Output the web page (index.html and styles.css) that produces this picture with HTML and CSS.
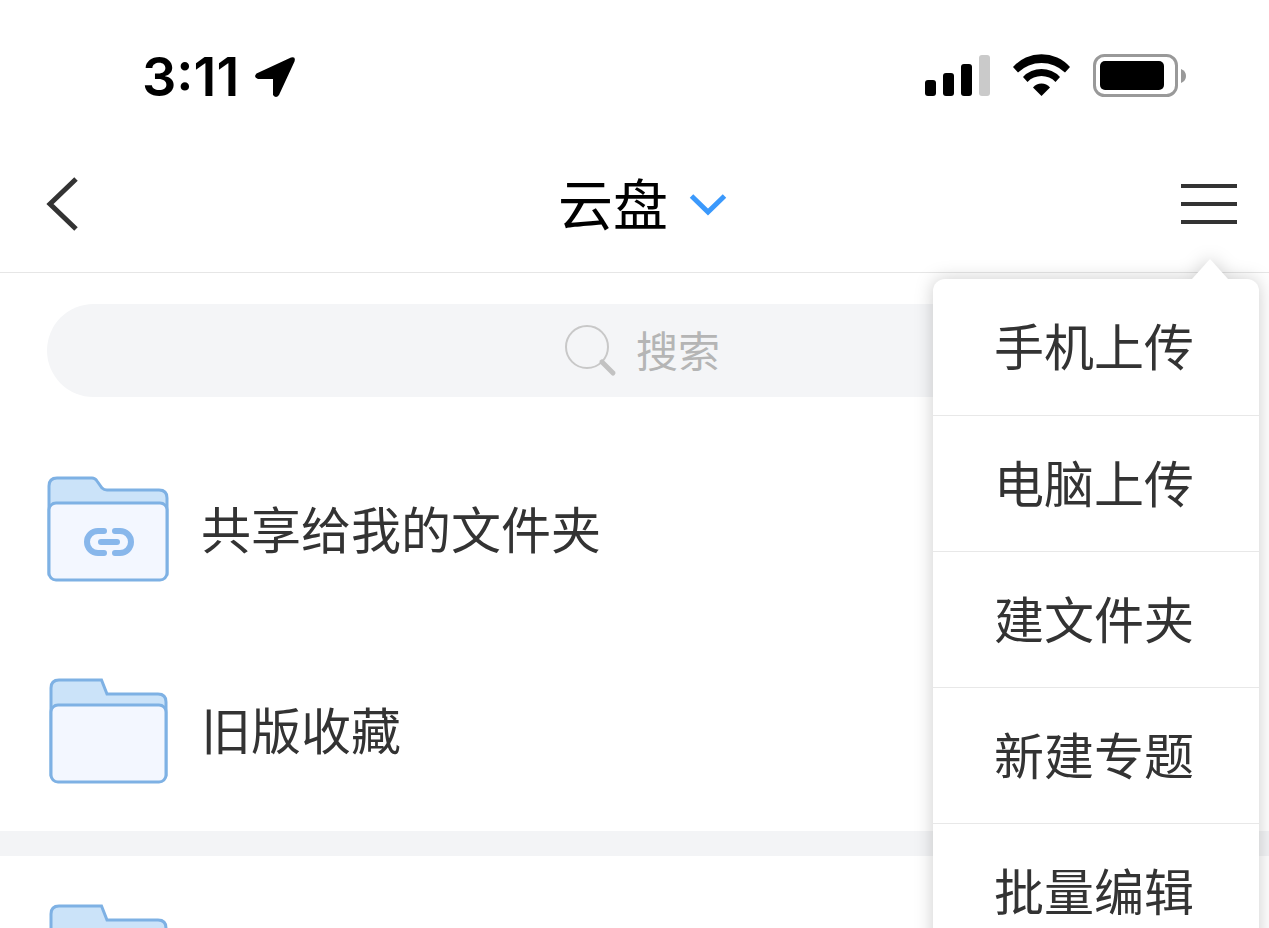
FILE: index.html
```html
<!DOCTYPE html>
<html lang="zh-CN">
<head>
    <meta charset="UTF-8">
    <meta name="viewport" content="width=device-width, initial-scale=1.0">
    <title>云盘</title>
    <link rel="stylesheet" href="styles.css">
</head>
<body>
    <svg class="defs" aria-hidden="true">
        <symbol id="folder" viewBox="0 0 122 106">
            <path d="M4 97V10q0-8 8-8H54.500L60 16H111q8 0 8 8V97z" fill="#cbe3f9" stroke="#7eb1e4" stroke-width="3"/>
            <rect x="4" y="27" width="115" height="77" rx="7" fill="#f3f7ff" stroke="#7eb1e4" stroke-width="3"/>
        </symbol>
    </svg>

    <div class="screen">
        <div class="status-bar">
            <div class="status-left">
                <span class="time">3:11</span>
                <svg width="42" height="42" viewBox="0 0 42 42">
                    <path d="M2.500 17.500 37 1.500Q42 0 40.500 5.500L25 39Q22 43 19 39V23H4Q-1 21 2.500 17.500z"/>
                </svg>
            </div>
            <div class="status-right">
                <svg width="66" height="44" viewBox="0 0 66 44">
                    <rect x="0" y="26" width="11" height="16" rx="3"/>
                    <rect x="18" y="19" width="11" height="23" rx="3"/>
                    <rect x="36" y="10" width="11" height="32" rx="3"/>
                    <rect x="54" y="1" width="11" height="41" rx="3" fill="#cacaca"/>
                </svg>
                <svg width="58" height="44" viewBox="0 0 58 44">
                    <path d="M0 13A38 38 0 0 1 57 13L52 18.500A34 34 0 0 0 5 18.500z"/>
                    <path d="M10 23A25.500 25.500 0 0 1 47 23L42.500 28A19.500 19.500 0 0 0 14.500 28z"/>
                    <path d="M20 33.500A11 11 0 0 1 37 33.500L28.500 42z"/>
                </svg>
                <svg width="94" height="44" viewBox="0 0 94 44">
                    <rect x="1.500" y="1.500" width="82" height="40" rx="10" fill="none" stroke="#999" stroke-width="3"/>
                    <rect x="7" y="7" width="64" height="29" rx="5"/>
                    <path d="M88 15q5 2 5 7t-5 7z" fill="#999"/>
                </svg>
            </div>
        </div>

        <header class="nav-bar">
            <button class="icon-button" type="button" aria-label="返回">
                <svg width="32" height="54" viewBox="0 0 32 54">
                    <path d="M29 2 3 27 29 52" fill="none" stroke="#333" stroke-width="5"/>
                </svg>
            </button>
            <button class="title" type="button">
                <span class="label">云盘</span>
                <svg width="36" height="24" viewBox="0 0 36 24">
                    <path d="M1.500 4 18 20 34.500 4" fill="none" stroke="#3b99fc" stroke-width="5"/>
                </svg>
            </button>
            <button class="icon-button" type="button" aria-label="菜单">
                <svg width="56" height="40" viewBox="0 0 56 40">
                    <path d="M0 2H56M0 20H56M0 38H56" stroke="#333" stroke-width="4"/>
                </svg>
            </button>

            <div class="menu">
                <button class="menu-item" type="button">手机上传</button>
                <button class="menu-item" type="button">电脑上传</button>
                <button class="menu-item" type="button">建文件夹</button>
                <button class="menu-item" type="button">新建专题</button>
                <button class="menu-item" type="button">批量编辑</button>
            </div>
        </header>

        <main>
            <label class="search">
                <svg width="52" height="52" viewBox="0 0 52 52">
                    <circle cx="23" cy="22" r="21" fill="none" stroke="#c8c8c8" stroke-width="2"/>
                    <path d="M38 37 49 48" stroke="#c2c2c2" stroke-width="5" stroke-linecap="round"/>
                </svg>
                <input class="search-input" type="text" placeholder="搜索" aria-label="搜索">
            </label>

            <div class="group">
                <a class="row" href="#">
                    <svg class="folder" viewBox="0 0 122 106">
                        <path d="M2 97V9q0-8 8-8H45q3 0 5 3l5 7q2 2 5 2H112q8 0 8 8V97z" fill="#cbe3f9" stroke="#7eb1e4" stroke-width="3"/>
                        <rect x="2" y="26" width="118" height="77" rx="7" fill="#f3f7ff" stroke="#7eb1e4" stroke-width="3"/>
                        <path d="M57 54H51a11 11 0 0 0 0 22H57M68 54h5a11 11 0 0 1 0 22H68M54 65H70" fill="none" stroke="#88b7eb" stroke-width="6" stroke-linecap="round"/>
                    </svg>
                    <span class="label">共享给我的文件夹</span>
                </a>
                <a class="row" href="#">
                    <svg class="folder"><use href="#folder"/></svg>
                    <span class="label">旧版收藏</span>
                </a>
            </div>

            <div class="group">
                <a class="row" href="#" aria-label="文件夹">
                    <svg class="folder"><use href="#folder"/></svg>
                </a>
            </div>
        </main>
    </div>
</body>
</html>
```

FILE: styles.css
```css
* {
    box-sizing: border-box;
}
body {
    margin: 0;
    background: #fff;
    color: #333;
    font-family: "Noto Sans CJK SC", sans-serif;
}
button {
    padding: 0;
    border: none;
    background: none;
    color: inherit;
    font-family: inherit;
    cursor: pointer;
}
svg {
    display: block;
    flex: none;
    overflow: visible;
}
.defs {
    position: absolute;
    width: 0;
    height: 0;
}
.screen {
    height: 100vh;
    overflow: hidden;
}
.label {
    padding-bottom: 6px;
}

/* status bar */
.status-bar {
    display: flex;
    justify-content: space-between;
    align-items: center;
    height: 136px;
    padding: 16px 82px 0 142px;
}
.status-left {
    display: flex;
    align-items: center;
    gap: 15px;
    padding-top: 2px;
}
.time {
    color: #000;
    font-family: Inter, sans-serif;
    font-size: 54px;
    font-weight: 600;
    line-height: 60px;
}
.status-right {
    display: flex;
    align-items: center;
    gap: 22px;
}

/* navigation */
.nav-bar {
    position: relative;
    display: flex;
    justify-content: space-between;
    align-items: center;
    height: 137px;
    padding: 0 32px 0 47px;
    border-bottom: 1px solid #e6e6e6;
}
.icon-button {
    display: flex;
    width: 56px;
}
.title {
    display: flex;
    align-items: center;
    gap: 22px;
    color: #000;
    font-size: 55px;
    line-height: 80px;
}

/* popup menu */
.menu {
    position: absolute;
    z-index: 1;
    top: calc(100% + 7px);
    right: 10px;
    width: 326px;
    background: #fff;
    border-radius: 12px;
    filter: drop-shadow(0 0 9px rgba(0, 0, 0, 0.2));
}
.menu::before {
    content: "";
    position: absolute;
    top: -20px;
    right: 31px;
    border: 18px solid transparent;
    border-top: none;
    border-bottom: 20px solid #fff;
}
.menu-item {
    display: block;
    width: 100%;
    height: 136px;
    padding: 0 4px 6px 0;
    font-size: 50px;
    line-height: 72px;
}
.menu-item + .menu-item {
    border-top: 1px solid #e8e8e8;
}

/* search */
.search {
    display: flex;
    justify-content: center;
    align-items: center;
    gap: 20px;
    height: 93px;
    margin: 31px 32px 32px 47px;
    border-radius: 47px;
    background: #f4f5f7;
}
.search-input {
    width: 84px;
    padding: 0 0 4px;
    border: none;
    outline: none;
    background: none;
    color: #333;
    font-family: inherit;
    font-size: 42px;
    line-height: 60px;
}
.search-input::placeholder {
    color: #b5b5b5;
    opacity: 1;
}

/* folder list */
.group + .group {
    border-top: 25px solid #f3f4f6;
}
.row {
    display: flex;
    align-items: center;
    gap: 32px;
    height: 201px;
    padding: 0 47px;
    color: #333;
    font-size: 50px;
    line-height: 72px;
    text-decoration: none;
}
.folder {
    width: 122px;
    height: 106px;
}
```
